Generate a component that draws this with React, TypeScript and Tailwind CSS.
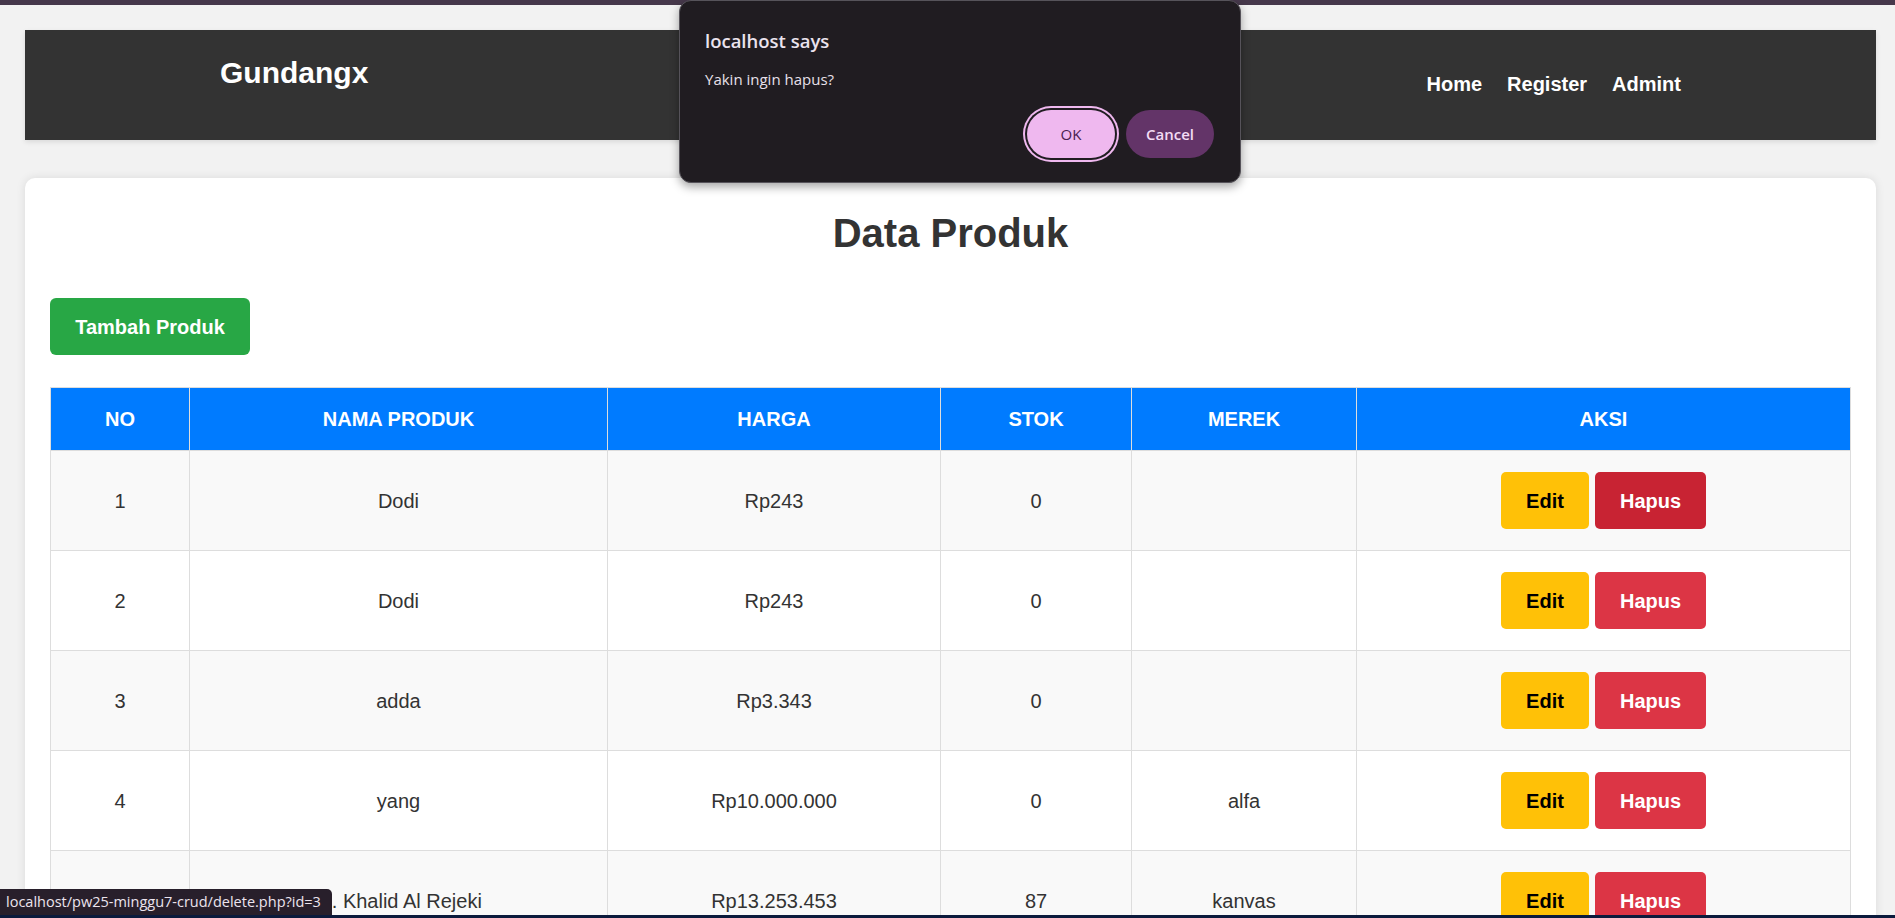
import React from 'react';

const rows = [
  { no: 1, nama: 'Dodi', harga: 'Rp243', stok: '0', merek: '', hover: true },
  { no: 2, nama: 'Dodi', harga: 'Rp243', stok: '0', merek: '' },
  { no: 3, nama: 'adda', harga: 'Rp3.343', stok: '0', merek: '' },
  { no: 4, nama: 'yang', harga: 'Rp10.000.000', stok: '0', merek: 'alfa' },
  { no: 5, nama: 'M. Khalid Al Rejeki', harga: 'Rp13.253.453', stok: '87', merek: 'kanvas' },
];

const columns = ['NO', 'NAMA PRODUK', 'HARGA', 'STOK', 'MEREK', 'AKSI'];
const widths = ['w-[139px]', 'w-[418px]', 'w-[333px]', 'w-[191px]', 'w-[225px]', 'w-[494px]'];

function ConfirmDialog() {
  return (
    <div className="absolute left-[679px] top-0 w-[562px] h-[183px] rounded-[12px] border border-[#56535a] bg-[#201c21] shadow-[0_4px_10px_rgba(0,0,0,0.35)] font-['Open_Sans',sans-serif] px-[25px] pt-[27px]">
      <p className="text-[18.5px] font-semibold leading-[26px] text-[#ebe3ee]">localhost says</p>
      <p className="mt-[15px] text-[15px] leading-[20px] text-[#e8e0ea]">Yakin ingin hapus?</p>
      <div className="mt-[21px] flex justify-end gap-[11px] pr-[1px]">
        <button className="w-[88px] h-[48px] rounded-full bg-[#efb8ef] text-[15px] text-[#4a2150] shadow-[0_0_0_2px_#201c21,0_0_0_4px_#efb8ef]">
          OK
        </button>
        <button className="w-[88px] h-[48px] rounded-full bg-[#633468] text-[15px] font-semibold text-[#f3dcf5]">
          Cancel
        </button>
      </div>
    </div>
  );
}

export default function App() {
  return (
    <div className="relative h-[918px] w-full overflow-hidden bg-[#f2f2f2] font-['Liberation_Sans',Arial,sans-serif] text-[#333]">
      <div className="h-[5px] bg-[#46384b]" />

      <div className="pl-[25px] pt-[25px]">
        <header className="flex h-[110px] w-[1851px] justify-between bg-[#333] px-[195px] shadow-[0_2px_5px_rgba(0,0,0,0.1)]">
          <h1 className="pt-[26px] text-[30px] font-bold leading-[34px] text-white">Gundangx</h1>
          <nav className="flex gap-[25px] pt-[43px] pr-[-1px] text-[20px] font-bold leading-[23px] text-white">
            <a>Home</a>
            <a>Register</a>
            <a>Admint</a>
          </nav>
        </header>

        <main className="mt-[38px] w-[1851px] rounded-[10px] bg-white px-[25px] pt-[32px] pb-[25px] shadow-[0_0_10px_rgba(0,0,0,0.1)]">
          <h2 className="text-center text-[40px] font-bold leading-[46px] text-[#333]">Data Produk</h2>

          <button className="mt-[42px] h-[57px] w-[200px] rounded-[6px] bg-[#28a745] text-[20px] font-bold text-white">
            Tambah Produk
          </button>

          <table className="mt-[32px] w-[1800px] table-fixed border-collapse text-[20px]">
            <thead>
              <tr className="bg-[#007bff] text-white">
                {columns.map((c, i) => (
                  <th key={c} className={`${widths[i]} h-[63px] border border-[#ddd] text-center font-bold`}>
                    {c}
                  </th>
                ))}
              </tr>
            </thead>
            <tbody>
              {rows.map((r, i) => (
                <tr key={r.no} className={i % 2 === 0 ? 'bg-[#f9f9f9]' : 'bg-white'}>
                  <td className="h-[100px] border border-[#ddd] text-center">{r.no}</td>
                  <td className="border border-[#ddd] text-center">{r.nama}</td>
                  <td className="border border-[#ddd] text-center">{r.harga}</td>
                  <td className="border border-[#ddd] text-center">{r.stok}</td>
                  <td className="border border-[#ddd] text-center">{r.merek}</td>
                  <td className="border border-[#ddd]">
                    <div className="flex justify-center gap-[6px]">
                      <button className="h-[57px] w-[88px] rounded-[5px] bg-[#ffc107] font-bold text-black">Edit</button>
                      <button
                        className={`h-[57px] w-[111px] rounded-[5px] font-bold text-white ${r.hover ? 'bg-[#c82333]' : 'bg-[#dc3545]'}`}
                      >
                        Hapus
                      </button>
                    </div>
                  </td>
                </tr>
              ))}
            </tbody>
          </table>
        </main>
      </div>

      <ConfirmDialog />

      <div className="absolute bottom-[3px] left-0 flex h-[26px] w-[332px] items-center rounded-tr-[5px] bg-[#281f2b] pl-[6px] font-['Open_Sans',sans-serif] text-[14.5px] text-[#ece4ee]">
        localhost/pw25-minggu7-crud/delete.php?id=3
      </div>
      <div className="absolute bottom-0 left-0 h-[3px] w-full bg-[#0b1a3c]" />
    </div>
  );
}
